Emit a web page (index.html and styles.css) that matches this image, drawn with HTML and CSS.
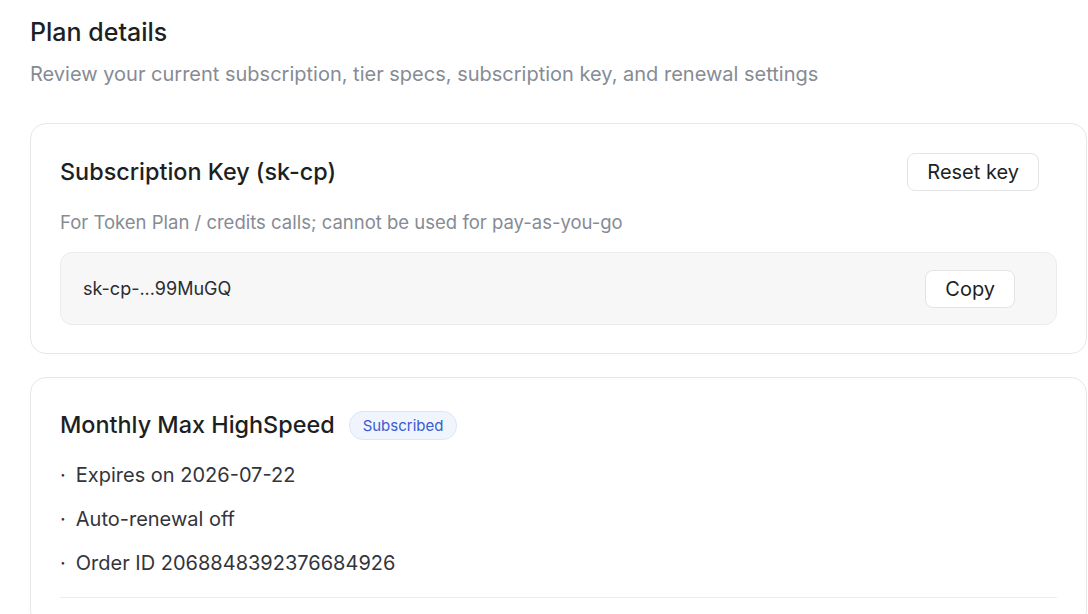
FILE: index.html
```html
<!DOCTYPE html>
<html lang="en">

<head>
    <meta charset="UTF-8">
    <meta name="viewport" content="width=device-width, initial-scale=1.0">
    <title>Plan details</title>
    <link rel="stylesheet" href="styles.css">
</head>

<body>
    <div class="page">
        <div class="head">
            <h1 class="title">Plan details</h1>
            <p class="sub">Review your current subscription, tier specs, subscription key, and renewal settings</p>
        </div>

        <div class="card">
            <div class="card-top">
                <h2 class="card-title">Subscription Key (sk-cp)</h2>
                <button class="btn reset">Reset key</button>
            </div>
            <p class="desc">For Token Plan / credits calls; cannot be used for pay-as-you-go</p>
            <div class="keybox">
                <span class="key">sk-cp-...99MuGQ</span>
                <button class="btn">Copy</button>
            </div>
        </div>

        <div class="card plan">
            <div class="plan-top">
                <h2 class="card-title">Monthly Max HighSpeed</h2>
                <span class="badge">Subscribed</span>
            </div>
            <ul class="info">
                <li>Expires on 2026-07-22</li>
                <li>Auto-renewal off</li>
                <li>Order ID 2068848392376684926</li>
            </ul>
            <div class="line"></div>
        </div>
    </div>
</body>

</html>
```

FILE: styles.css
```css
* {
    box-sizing: border-box;
}

body {
    margin: 0;
    background: #ffffff;
    font-family: Inter, "Noto Sans", sans-serif;
    color: #1d1f23;
}

.page {
    padding: 16px 1px 0 30px;
}

.title {
    margin: 0;
    font-size: 25px;
    font-weight: 500;
    line-height: 32px;
}

.sub {
    margin: 12px 0 0;
    font-size: 20px;
    line-height: 28px;
    color: #868b94;
}

.card {
    margin-top: 35px;
    border: 1px solid #e6e7ea;
    border-radius: 16px;
    padding: 28px 29px 28px 29px;
}

.card-top {
    display: flex;
    justify-content: space-between;
    align-items: center;
}

.card-title {
    margin: 0;
    font-size: 23.4px;
    font-weight: 500;
    line-height: 40px;
}

.btn {
    font-family: inherit;
    font-size: 20px;
    color: #1d1f23;
    background: #ffffff;
    border: 1px solid #e3e4e7;
    border-radius: 8px;
    height: 38px;
    padding: 0 19px;
}

.reset {
    margin-right: 18px;
}

.desc {
    margin: 17px 0 0;
    font-size: 18.5px;
    line-height: 26px;
    color: #868b94;
}

.keybox {
    margin-top: 17px;
    display: flex;
    justify-content: space-between;
    align-items: center;
    background: #f7f7f8;
    border: 1px solid #ececee;
    border-radius: 12px;
    height: 73px;
    padding: 0 41px 0 22px;
}

.key {
    font-size: 18px;
    color: #2a2c30;
}

.plan {
    margin-top: 23px;
    padding-top: 27px;
}

.plan-top {
    display: flex;
    align-items: center;
    gap: 14px;
}

.badge {
    font-size: 15px;
    color: #3a5bd0;
    background: #eff4fd;
    border: 1px solid #dde6f7;
    border-radius: 14px;
    padding: 3px 13px;
    line-height: 21px;
}

.info {
    list-style: none;
    margin: 8px 0 0;
    padding: 0;
}

.info li {
    font-size: 20px;
    line-height: 44px;
    color: #33353a;
}

.info li::before {
    content: "·";
    margin-right: 10px;
}

.line {
    margin-top: 12px;
    border-top: 1px solid #ececee;
}
```
